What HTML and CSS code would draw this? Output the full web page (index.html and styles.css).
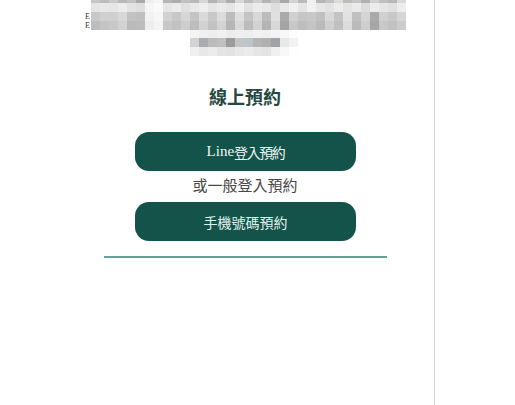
FILE: index.html
```html
<!DOCTYPE html>
<html lang="zh-Hant">
<head>
<meta charset="utf-8">
<title>線上預約</title>
<link rel="stylesheet" href="styles.css">
</head>
<body>
<div class="page">
  <div class="blur-top">
    <div class="edge"><span class="edge-e">E</span><span class="edge-e">E</span></div>
    <div class="mosaic">
      <div class="m-row ra"></div>
      <div class="m-row rb"></div>
      <div class="m-row rc"></div>
      <div class="m-row rd"></div>
    </div>
  </div>
  <div class="mosaic-small">
    <div class="s-row s1"></div>
    <div class="s-row s2"></div>
    <div class="s-row s3"></div>
  </div>
  <h1 class="title">線上預約</h1>
  <a class="btn btn-line" href="#"><span class="latin">Line</span><span class="cjk-tight">登入預約</span></a>
  <p class="or">或一般登入預約</p>
  <a class="btn btn-phone" href="#">手機號碼預約</a>
  <div class="divider"></div>
</div>
</body>
</html>
```
FILE: styles.css
```css
html, body {
  margin: 0;
  padding: 0;
  background: #ffffff;
}
body {
  font-family: "Noto Sans CJK TC", "Noto Sans", sans-serif;
}
.page {
  margin-left: 56px;
  width: 378px;
  min-height: 100vh;
  border-right: 1px solid #d4d4d4;
  display: flex;
  flex-direction: column;
  align-items: center;
}
.blur-top {
  display: flex;
  align-self: flex-start;
  margin-left: 29px;
}
.edge {
  width: 6px;
  height: 30px;
  padding-top: 12px;
  box-sizing: border-box;
  display: flex;
  flex-direction: column;
  font-family: "Liberation Serif", serif;
  color: #333;
  font-size: 8px;
}
.edge-e {
  height: 9px;
  line-height: 9px;
}
.mosaic {
  width: 315px;
  display: flex;
  flex-direction: column;
}
.m-row { width: 315px; }
.ra {
  height: 3px;
  background: linear-gradient(90deg,
    #c6c6c6 0 9px, #bcbcbc 9px 18px, #cacaca 18px 27px, #b9b9b9 27px 36px, #c2c2c2 36px 45px,
    #a9a9a9 45px 54px, #efefef 54px 63px, #f4f4f4 63px 72px, #b6b6b6 72px 81px, #adadad 81px 90px,
    #c0c0c0 90px 99px, #b8b8b8 99px 108px, #d6d6d6 108px 117px, #b2b2b2 117px 126px, #c8c8c8 126px 135px,
    #aeaeae 135px 144px, #d8d8d8 144px 153px, #bcbcbc 153px 162px, #cfcfcf 162px 171px, #b4b4b4 171px 180px,
    #c6c6c6 180px 189px, #a8a8a8 189px 198px, #d2d2d2 198px 207px, #bababa 207px 216px, #f0f0f0 216px 225px,
    #b5b5b5 225px 234px, #c2c2c2 234px 243px, #dedbd6 243px 252px, #bcbcbc 252px 261px, #c6c6c6 261px 270px,
    #b0b0b0 270px 279px, #d0d0d0 279px 288px, #c0c0c0 288px 297px, #b8b8b8 297px 306px, #dadada 306px 315px);
}
.rb {
  height: 9px;
  background: linear-gradient(90deg,
    #e4e4e4 0 9px, #e8e8e8 9px 18px, #e6e6e6 18px 27px, #ececec 27px 36px, #e2e2e2 36px 45px,
    #dedede 45px 54px, #f6f6f6 54px 63px, #fafafa 63px 72px, #e6e6e6 72px 81px, #ececec 81px 90px,
    #e0e0e0 90px 99px, #e8e8e8 99px 108px, #eeeeee 108px 117px, #e4e4e4 117px 126px, #ebebeb 126px 135px,
    #e6e6e6 135px 144px, #f0f0f0 144px 153px, #e2e2e2 153px 162px, #ececec 162px 171px, #e8e8e8 171px 180px,
    #dedede 180px 189px, #e8e8e8 189px 198px, #f0f0f0 198px 207px, #e4e4e4 207px 216px, #f2f2f2 216px 225px,
    #e6e6e6 225px 234px, #e2e2e2 234px 243px, #ececec 243px 252px, #e4e4e4 252px 261px, #eaeaea 261px 270px,
    #dcdcdc 270px 279px, #ececec 279px 288px, #e6e6e6 288px 297px, #e0e0e0 297px 306px, #eeeeee 306px 315px);
}
.rc {
  height: 9px;
  background: linear-gradient(90deg,
    #c8c8c8 0 9px, #d0d0d0 9px 18px, #cfcfcf 18px 27px, #d8d8d8 27px 36px, #c2c2c2 36px 45px,
    #c0c0c0 45px 54px, #f2f2f2 54px 63px, #f7f7f7 63px 72px, #d2d2d2 72px 81px, #c8c8c8 81px 90px,
    #d6d6d6 90px 99px, #c4c4c4 99px 108px, #dadada 108px 117px, #c8c8c8 117px 126px, #dcdcdc 126px 135px,
    #bdbdbd 135px 144px, #dedede 144px 153px, #c4c4c4 153px 162px, #d8d8d8 162px 171px, #bcbcbc 171px 180px,
    #e0e0e0 180px 189px, #a9a9a9 189px 198px, #d0d0d0 198px 207px, #c6c6c6 207px 216px, #c8c8c8 216px 225px,
    #c0c0c0 225px 234px, #d8d8d8 234px 243px, #c4c4c4 243px 252px, #e2e2e2 252px 261px, #c0c0c0 261px 270px,
    #d4d4d4 270px 279px, #a9a9a9 279px 288px, #d0d0d0 288px 297px, #c8c8c8 297px 306px, #d6d6d6 306px 315px);
}
.rd {
  height: 9px;
  background: linear-gradient(90deg,
    #bdbdbd 0 9px, #c4c4c4 9px 18px, #c8c8c8 18px 27px, #d2d2d2 27px 36px, #bababa 36px 45px,
    #bcbcbc 45px 54px, #eeeeee 54px 63px, #f4f4f4 63px 72px, #c8c8c8 72px 81px, #c2c2c2 81px 90px,
    #cecece 90px 99px, #bcbcbc 99px 108px, #d2d2d2 108px 117px, #c2c2c2 117px 126px, #d4d4d4 126px 135px,
    #b6b6b6 135px 144px, #d8d8d8 144px 153px, #bcbcbc 153px 162px, #d2d2d2 162px 171px, #b4b4b4 171px 180px,
    #d8d8d8 180px 189px, #a4a4a4 189px 198px, #c8c8c8 198px 207px, #bebebe 207px 216px, #c4c4c4 216px 225px,
    #bababa 225px 234px, #d0d0d0 234px 243px, #c0c0c0 243px 252px, #dcdcdc 252px 261px, #bababa 261px 270px,
    #cecece 270px 279px, #a6a6a6 279px 288px, #c8c8c8 288px 297px, #c2c2c2 297px 306px, #cccccc 306px 315px);
}
.mosaic-small {
  width: 108px;
  margin-right: 2px;
  display: flex;
  flex-direction: column;
}
.s-row { width: 108px; }
.s1 {
  height: 8px;
  background: linear-gradient(90deg,
    #f4f4f4 0 9px, #f0f0f0 9px 18px, #eeeeee 18px 27px, #f2f2f2 27px 36px, #ececec 36px 45px,
    #f0f0f0 45px 54px, #eeeeee 54px 63px, #f2f2f2 63px 72px, #f0f0f0 72px 81px, #f4f4f4 81px 90px,
    #f8f8f8 90px 99px, #fcfcfc 99px 108px);
}
.s2 {
  height: 9px;
  background: linear-gradient(90deg,
    #d2d2d2 0 9px, #a8acb0 9px 18px, #bcbcbc 18px 27px, #c0c0c0 27px 36px, #9c9c9c 36px 45px,
    #c4c4c4 45px 54px, #bcc4cc 54px 63px, #b4b4b4 63px 72px, #b0b0b0 72px 81px, #a0a2a6 81px 90px,
    #e8e8e8 90px 99px, #f2f2f2 99px 108px);
}
.s3 {
  height: 9px;
  background: linear-gradient(90deg,
    #f0f0f0 0 9px, #e8e8e8 9px 18px, #ececec 18px 27px, #e4e4e4 27px 36px, #e2e2e2 36px 45px,
    #e8e8e8 45px 54px, #ebebeb 54px 63px, #e6e6e6 63px 72px, #e4e4e4 72px 81px, #f0f0f0 81px 90px,
    #f8f8f8 90px 99px, #fefefe 99px 108px);
}
.title {
  margin: 28px 0 0;
  font-size: 18px;
  line-height: 24px;
  font-weight: 700;
  color: #26493f;
}
.btn {
  box-sizing: border-box;
  width: 221px;
  height: 39px;
  border-radius: 14px;
  background: #13534a;
  color: #eef7f4;
  text-decoration: none;
  display: flex;
  align-items: center;
  justify-content: center;
  font-size: 14px;
  margin-left: 1px;
}
.btn-line {
  margin-top: 24px;
}
.latin {
  font-family: "Liberation Serif", serif;
  font-size: 15px;
}
.cjk-tight {
  letter-spacing: -1.4px;
  font-size: 14px;
}
.btn-phone {
  color: #e2f3ee;
}
.or {
  margin: 4px 0 7px;
  font-size: 15px;
  line-height: 20px;
  color: #474747;
}
.divider {
  width: 283px;
  height: 2px;
  margin-top: 15px;
  margin-left: 1px;
  background: #62a198;
}
```
